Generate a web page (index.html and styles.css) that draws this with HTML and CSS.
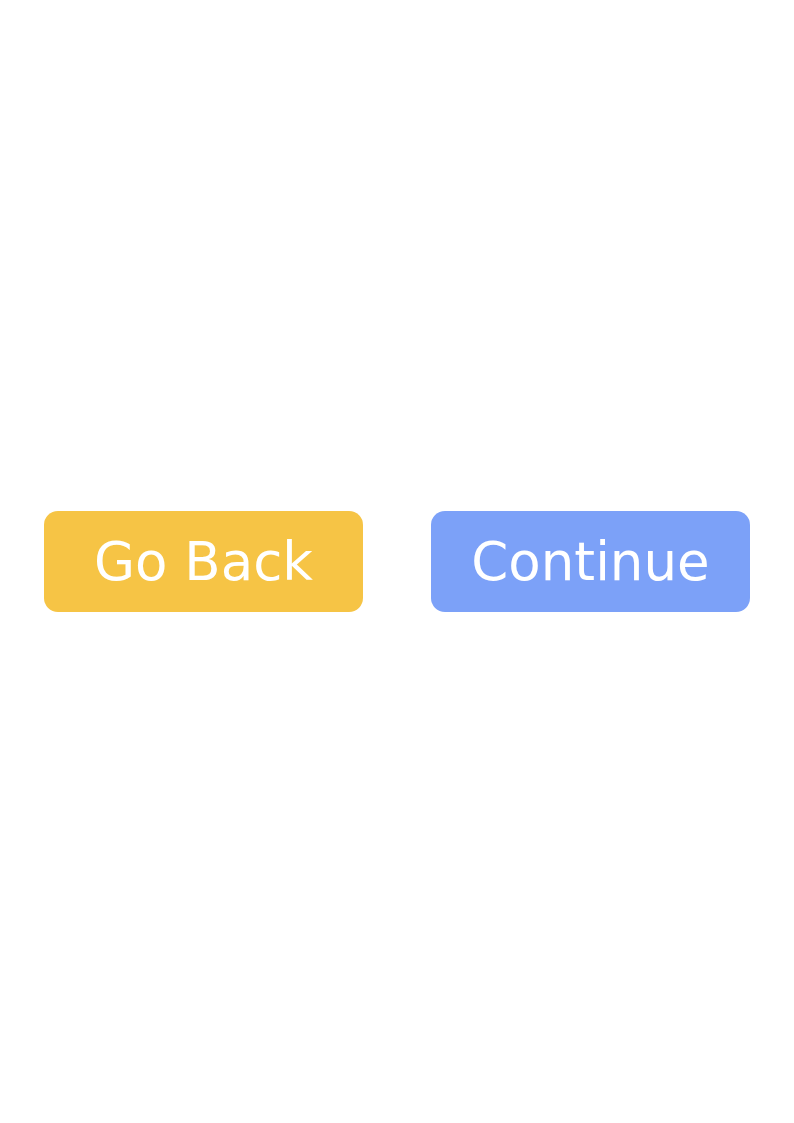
FILE: index.html
```html
<!DOCTYPE html>
<html>
<head>
<meta charset="utf-8">
<link rel="stylesheet" href="styles.css">
</head>
<body>
<div class="page">
  <button class="btn btn-back">Go Back</button>
  <button class="btn btn-continue">Continue</button>
</div>
</body>
</html>
```
FILE: styles.css
```css
html, body {
  margin: 0;
  padding: 0;
  background: #ffffff;
}
.page {
  height: 1123px;
  display: flex;
  align-items: center;
  justify-content: space-between;
  padding: 0 44px;
  box-sizing: border-box;
}
.btn {
  width: 319px;
  height: 101px;
  border: none;
  border-radius: 14px;
  color: #ffffff;
  font-family: "DejaVu Sans", sans-serif;
  font-size: 53px;
  line-height: 1;
  padding: 0;
  display: flex;
  align-items: center;
  justify-content: center;
}
.btn-back {
  background: #f6c445;
}
.btn-continue {
  background: #7ca1f8;
}
```
